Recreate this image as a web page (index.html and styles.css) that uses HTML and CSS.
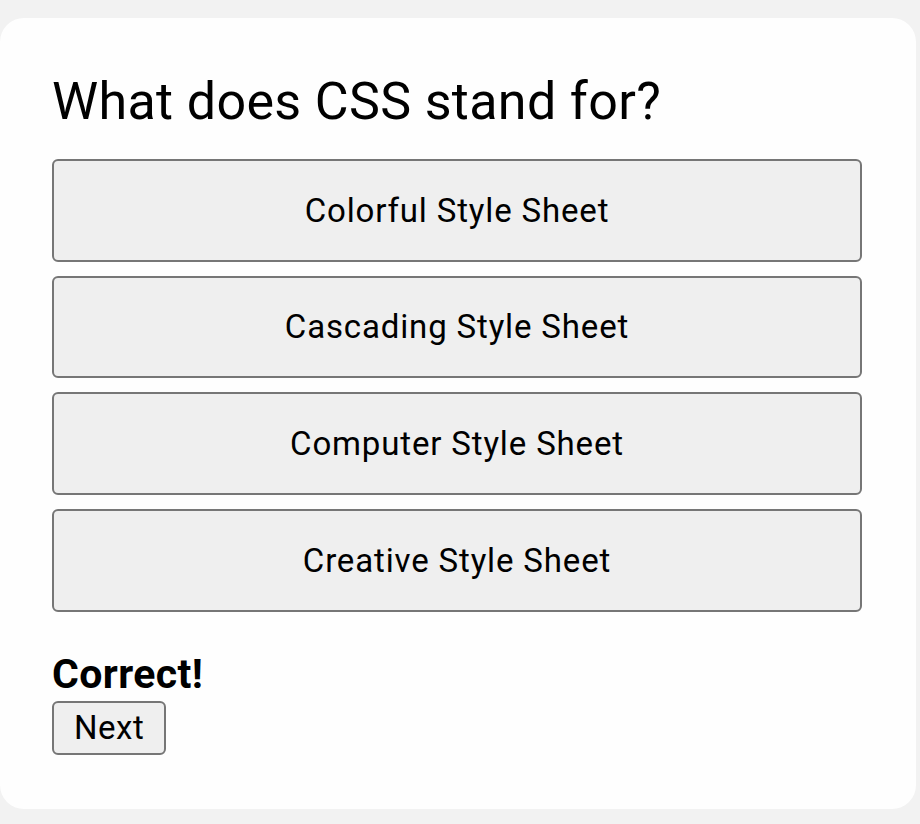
FILE: index.html
```html
<!DOCTYPE html>
<html>
<head>
<meta charset="utf-8">
<link rel="stylesheet" href="styles.css">
</head>
<body>
<div class="card">
  <h2 class="question">What does CSS stand for?</h2>
  <div class="options">
    <button class="option">Colorful Style Sheet</button>
    <button class="option">Cascading Style Sheet</button>
    <button class="option">Computer Style Sheet</button>
    <button class="option">Creative Style Sheet</button>
  </div>
  <p class="result">Correct!</p>
  <div class="actions">
    <button class="next">Next</button>
  </div>
</div>
</body>
</html>
```
FILE: styles.css
```css
html, body {
  margin: 0;
  padding: 0;
  background: #f2f2f2;
}
body {
  padding: 18px 4px 15px 0;
  font-family: Roboto, "Liberation Sans", sans-serif;
  color: #000;
}
.card {
  background: #fefefe;
  border-radius: 24px;
  padding: 54px 54px 52px 52px;
  height: 791px;
  box-sizing: border-box;
}
.question {
  margin: 0 0 27px 0;
  font-size: 52px;
  line-height: 60px;
  font-weight: 400;
  letter-spacing: 0.35px;
}
.options {
  display: flex;
  flex-direction: column;
  gap: 14px;
}
.option {
  height: 102.67px;
  font-family: Roboto, "Liberation Sans", sans-serif;
  font-size: 33px;
  letter-spacing: 0.85px;
  color: #000;
  background: #efefef;
  border: 2px solid #767676;
  border-radius: 6px;
  padding: 0;
}
.result {
  margin: 38px 0 0 0;
  font-size: 41px;
  line-height: 48px;
  font-weight: 700;
  letter-spacing: 0.4px;
}
.actions {
  margin-top: 3px;
}
.next {
  height: 54px;
  padding: 0 20px;
  font-family: Roboto, "Liberation Sans", sans-serif;
  font-size: 33px;
  letter-spacing: 0.5px;
  color: #000;
  background: #efefef;
  border: 2px solid #767676;
  border-radius: 6px;
}
```
